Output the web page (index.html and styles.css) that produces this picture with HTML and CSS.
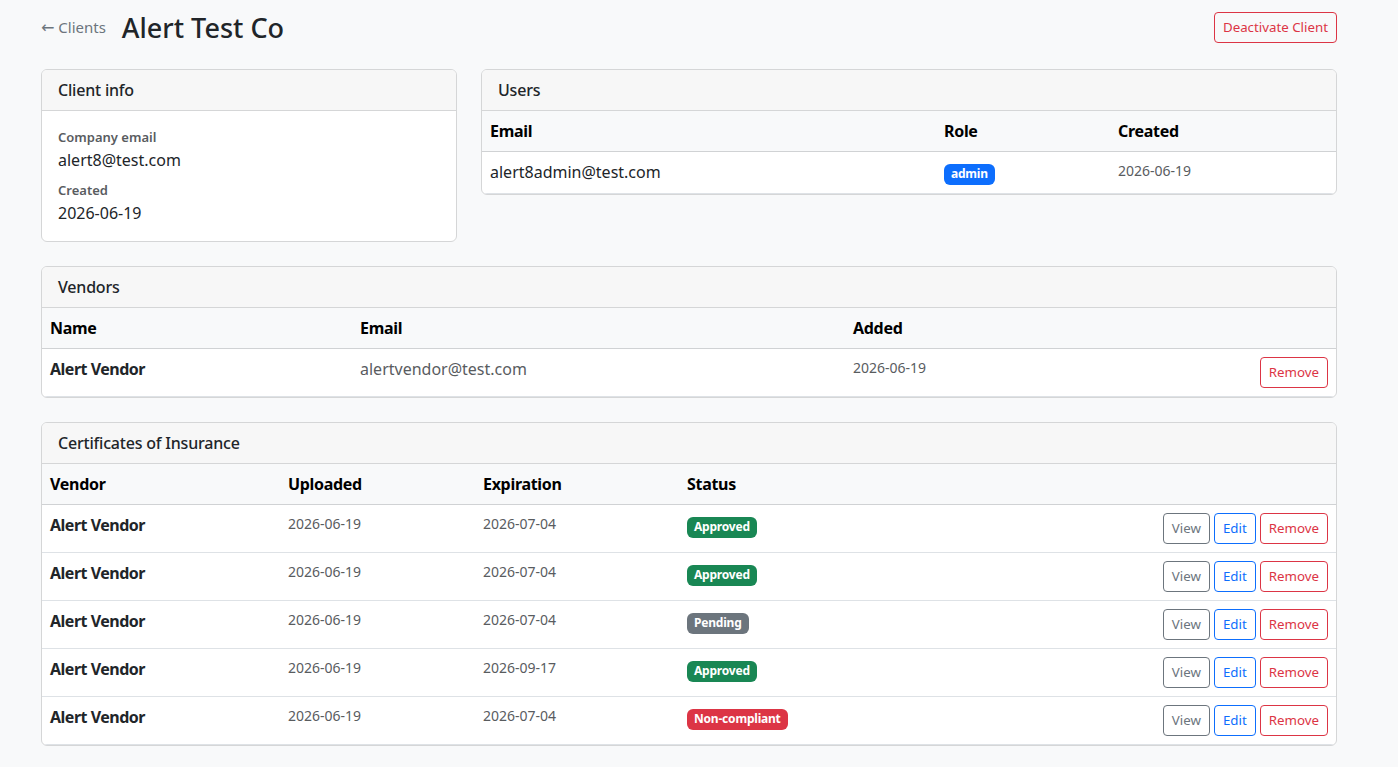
FILE: index.html
```html
<!DOCTYPE html>
<html lang="en">
<head>
    <meta charset="UTF-8">
    <meta name="viewport" content="width=device-width, initial-scale=1.0">
    <title>Alert Test Co</title>
    <link rel="stylesheet" href="styles.css">
</head>
<body>
    <div class="page">
        <div class="page-header">
            <div class="title-group">
                <a href="#" class="back-link"><span class="arrow">&larr;</span> Clients</a>
                <h1>Alert Test Co</h1>
            </div>
            <button class="btn btn-danger">Deactivate Client</button>
        </div>

        <div class="top-row">
            <div class="card client-card">
                <div class="card-header">Client info</div>
                <div class="card-body">
                    <div class="field-label">Company email</div>
                    <div class="field-value">alert8@test.com</div>
                    <div class="field-label">Created</div>
                    <div class="field-value last">2026-06-19</div>
                </div>
            </div>

            <div class="card users-card">
                <div class="card-header">Users</div>
                <table>
                    <thead>
                        <tr>
                            <th class="w-user-email">Email</th>
                            <th class="w-role">Role</th>
                            <th>Created</th>
                        </tr>
                    </thead>
                    <tbody>
                        <tr>
                            <td>alert8admin@test.com</td>
                            <td><span class="badge badge-blue">admin</span></td>
                            <td class="date">2026-06-19</td>
                        </tr>
                    </tbody>
                </table>
            </div>
        </div>

        <div class="card">
            <div class="card-header">Vendors</div>
            <table>
                <thead>
                    <tr>
                        <th class="w-name">Name</th>
                        <th class="w-vendor-email">Email</th>
                        <th>Added</th>
                        <th class="actions"></th>
                    </tr>
                </thead>
                <tbody>
                    <tr>
                        <td class="strong">Alert Vendor</td>
                        <td class="muted">alertvendor@test.com</td>
                        <td class="date">2026-06-19</td>
                        <td class="actions"><button class="btn btn-danger">Remove</button></td>
                    </tr>
                </tbody>
            </table>
        </div>

        <div class="card">
            <div class="card-header">Certificates of Insurance</div>
            <table>
                <thead>
                    <tr>
                        <th class="w-vendor">Vendor</th>
                        <th class="w-uploaded">Uploaded</th>
                        <th class="w-exp">Expiration</th>
                        <th>Status</th>
                        <th class="actions"></th>
                    </tr>
                </thead>
                <tbody id="coiRows"></tbody>
            </table>
        </div>
    </div>

    <script>
        const certs = [
            { uploaded: '2026-06-19', expires: '2026-07-04', status: 'Approved' },
            { uploaded: '2026-06-19', expires: '2026-07-04', status: 'Approved' },
            { uploaded: '2026-06-19', expires: '2026-07-04', status: 'Pending' },
            { uploaded: '2026-06-19', expires: '2026-09-17', status: 'Approved' },
            { uploaded: '2026-06-19', expires: '2026-07-04', status: 'Non-compliant' }
        ];

        const badgeClass = {
            'Approved': 'badge-green',
            'Pending': 'badge-gray',
            'Non-compliant': 'badge-red'
        };

        const rows = certs.map(function(c) {
            return '<tr>' +
                '<td class="strong">Alert Vendor</td>' +
                '<td class="date">' + c.uploaded + '</td>' +
                '<td class="date">' + c.expires + '</td>' +
                '<td><span class="badge ' + badgeClass[c.status] + '">' + c.status + '</span></td>' +
                '<td class="actions"><div class="btn-group">' +
                    '<button class="btn btn-secondary">View</button>' +
                    '<button class="btn btn-primary">Edit</button>' +
                    '<button class="btn btn-danger">Remove</button>' +
                '</div></td>' +
            '</tr>';
        });

        document.getElementById('coiRows').innerHTML = rows.join('');
    </script>
</body>
</html>
```

FILE: styles.css
```css
* {
    box-sizing: border-box;
}
body {
    margin: 0;
    background: #f8f9fa;
    color: #212529;
    font-family: "Noto Sans", "Open Sans", sans-serif;
    font-size: 16px;
    line-height: 1.5;
}
.page {
    width: 1296px;
    margin-left: 41px;
    padding-top: 12px;
    padding-bottom: 24px;
}
.page-header {
    display: flex;
    justify-content: space-between;
    align-items: center;
    height: 31px;
    margin-bottom: 26px;
}
.title-group {
    display: flex;
    align-items: center;
    gap: 16px;
}
.back-link {
    color: #6c757d;
    text-decoration: none;
    font-size: 15px;
}
.back-link .arrow {
    font-family: "DejaVu Sans", sans-serif;
    font-size: 16px;
}
h1 {
    margin: 0;
    font-size: 27px;
    font-weight: 500;
    line-height: 1.2;
    padding-top: 2px;
}
.top-row {
    display: flex;
    gap: 24px;
    align-items: flex-start;
}
.card {
    background: #fff;
    border: 1px solid #d5d6d7;
    border-radius: 6px;
    overflow: hidden;
    margin-bottom: 24px;
}
.client-card {
    width: 416px;
}
.users-card {
    flex: 1;
}
.card-header {
    background: #f7f7f7;
    border-bottom: 1px solid #d5d6d7;
    padding: 8px 16px;
    line-height: 24px;
    font-weight: 500;
    letter-spacing: -0.2px;
}
.card-body {
    padding: 16px;
}
.field-label {
    font-size: 13px;
    font-weight: 600;
    color: #595c5f;
    line-height: 21px;
}
.field-value {
    line-height: 24px;
    margin-bottom: 8px;
}
.field-value.last {
    margin-bottom: 0;
}
table {
    width: 100%;
    border-collapse: collapse;
}
th, td {
    text-align: left;
    vertical-align: top;
    padding: 8px;
    border-bottom: 1px solid #dee2e6;
}
thead th {
    background: #f8f9fa;
    color: #000;
    font-weight: 700;
    border-bottom-color: #d0d2d4;
    letter-spacing: -0.3px;
}
td.strong {
    font-weight: 700;
    letter-spacing: -0.5px;
}
td.muted {
    color: #595c5f;
}
td.date {
    font-size: 14px;
    color: #595c5f;
}
.w-user-email { width: 454px; }
.w-role { width: 174px; }
.w-name { width: 310px; }
.w-vendor-email { width: 493px; }
.w-vendor { width: 238px; }
.w-uploaded { width: 195px; }
.w-exp { width: 204px; }
.actions {
    width: 1%;
    white-space: nowrap;
    text-align: right;
}
.btn-group {
    display: flex;
    gap: 4px;
    justify-content: flex-end;
}
.btn {
    font-family: inherit;
    font-size: 13.3px;
    line-height: 21px;
    padding: 4px 8px;
    border-radius: 4px;
    background: transparent;
    border: 1px solid;
    cursor: pointer;
}
.btn-danger {
    color: #dc3545;
    border-color: #dc3545;
}
.btn-primary {
    color: #0d6efd;
    border-color: #0d6efd;
}
.btn-secondary {
    color: #6c757d;
    border-color: #6c757d;
}
.badge {
    display: inline-block;
    font-size: 12px;
    font-weight: 700;
    line-height: 1;
    color: #fff;
    padding: 4px 7px 5px;
    border-radius: 6px;
    letter-spacing: -0.2px;
}
.badge-blue { background: #0d6efd; }
.badge-green { background: #198754; }
.badge-gray { background: #6c757d; }
.badge-red { background: #dc3545; }
```
